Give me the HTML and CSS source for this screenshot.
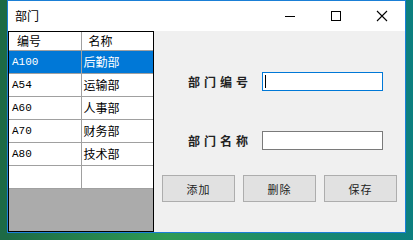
FILE: index.html
```html
<!DOCTYPE html>
<html>
<head>
    <title>部门</title>
    <link rel="stylesheet" href="styles.css">
</head>
<body>
    <div class="window">
        <div class="titlebar">
            <span class="title">部门</span>
            <div class="controls">
                <span class="ctl">
                    <svg width="12" height="12" viewBox="0 0 12 12"><path d="M1 6.5h10" stroke="#000" stroke-width="1"/></svg>
                </span>
                <span class="ctl">
                    <svg width="12" height="12" viewBox="0 0 12 12"><rect x="1.5" y="1.5" width="9" height="9" fill="none" stroke="#000" stroke-width="1"/></svg>
                </span>
                <span class="ctl">
                    <svg width="12" height="12" viewBox="0 0 12 12"><path d="M1 1l10 10M11 1L1 11" stroke="#000" stroke-width="1.1"/></svg>
                </span>
            </div>
        </div>
        <div class="content">
            <div class="grid">
                <table>
                    <colgroup>
                        <col class="col-code">
                        <col class="col-name">
                    </colgroup>
                    <tr class="head">
                        <th>编号</th>
                        <th>名称</th>
                    </tr>
                    <tr class="selected">
                        <td class="code">A100</td>
                        <td>后勤部</td>
                    </tr>
                    <tr>
                        <td class="code">A54</td>
                        <td>运输部</td>
                    </tr>
                    <tr>
                        <td class="code">A60</td>
                        <td>人事部</td>
                    </tr>
                    <tr>
                        <td class="code">A70</td>
                        <td>财务部</td>
                    </tr>
                    <tr>
                        <td class="code">A80</td>
                        <td>技术部</td>
                    </tr>
                    <tr>
                        <td class="code"></td>
                        <td></td>
                    </tr>
                </table>
            </div>
            <div class="panel">
                <div class="form-row first">
                    <label>部门编号</label>
                    <div class="input focused"><span class="caret"></span></div>
                </div>
                <div class="form-row">
                    <label>部门名称</label>
                    <div class="input"></div>
                </div>
                <div class="buttons">
                    <button>添加</button>
                    <button>删除</button>
                    <button>保存</button>
                </div>
            </div>
        </div>
    </div>
</body>
</html>
```

FILE: styles.css
```css
body {
    margin: 0;
    width: 413px;
    height: 240px;
    overflow: hidden;
    font-family: "Noto Sans CJK SC", "Liberation Sans", sans-serif;
    background: linear-gradient(90deg, #1d6a45 0, #1d6a45 7px, #2e9a55 40%, #1a8a6a 70%, #0c7f80 100%);
}
.window {
    margin-left: 7px;
    width: 397px;
    height: 231px;
    border: 1px solid #1a7fd6;
    background-color: #f0f0f0;
}
.titlebar {
    height: 30px;
    background-color: #fff;
    display: flex;
    align-items: center;
    justify-content: space-between;
}
.title {
    font-size: 12px;
    margin-left: 7px;
    margin-top: -2px;
    color: #000;
}
.controls {
    display: flex;
    height: 30px;
}
.ctl {
    width: 46px;
    display: flex;
    align-items: center;
    justify-content: center;
}
.content {
    display: flex;
    height: 201px;
}
.grid {
    width: 144px;
    height: 199px;
    border: 1px solid #000;
    background-color: #ababab;
}
table {
    border-collapse: collapse;
    width: 144px;
    table-layout: fixed;
}
.col-code {
    width: 72px;
}
.col-name {
    width: 72px;
}
th, td {
    border: 1px solid #a0a0a0;
    height: 22px;
    padding: 0;
    background-color: #fff;
    font-size: 12px;
    font-weight: normal;
    text-align: left;
    line-height: 12px;
    overflow: hidden;
    white-space: nowrap;
}
tr:first-child th {
    border-top: none;
}
tr th:first-child, tr td:first-child {
    border-left: none;
}
tr th:last-child, tr td:last-child {
    border-right: none;
}
.head th {
    height: 18px;
    padding-left: 8px;
    border-bottom: 1px solid #a0a0a0;
}
.head th:last-child {
    border-left: 1px solid #e3e3e3;
    padding-left: 7px;
}
td {
    padding-left: 2px;
}
td.code {
    font-family: "Liberation Mono", monospace;
    font-size: 11px;
    padding-left: 3px;
}
.selected td {
    background-color: #0078d7;
    color: #fff;
}
.panel {
    flex: 1;
}
.form-row {
    display: flex;
    align-items: center;
    margin-top: 40px;
}
.form-row.first {
    margin-top: 41px;
}
label {
    width: 74px;
    margin-left: 34px;
    font-size: 12px;
    font-weight: bold;
    letter-spacing: 4px;
    color: #222;
}
.input {
    width: 119px;
    height: 17px;
    border: 1px solid #7a7a7a;
    background-color: #fff;
    position: relative;
}
.input.focused {
    border-color: #0078d7;
}
.caret {
    position: absolute;
    left: 2px;
    top: 2px;
    width: 1px;
    height: 13px;
    background-color: #000;
}
.buttons {
    display: flex;
    gap: 8px;
    margin-top: 25px;
    margin-left: 8px;
}
button {
    width: 73px;
    height: 27px;
    border: 1px solid #adadad;
    background-color: #e1e1e1;
    font-family: "Noto Sans CJK SC", sans-serif;
    font-size: 11px;
    letter-spacing: 1px;
    color: #222;
    padding: 0;
}
```
